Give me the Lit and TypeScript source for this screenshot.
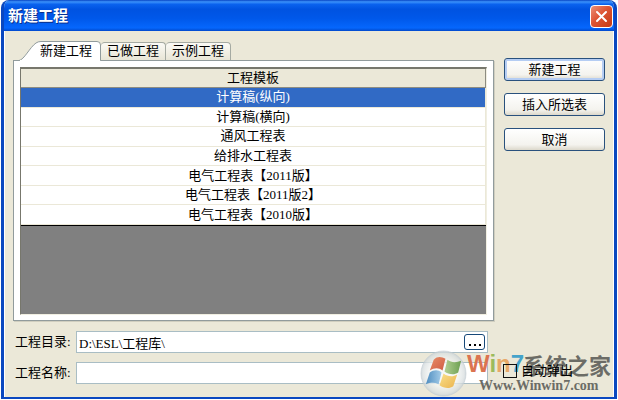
import { LitElement, html, css, svg } from "lit";
import { customElement, property, state } from "lit/decorators.js";
import { classMap } from "lit/directives/class-map.js";

@customElement("template-table")
export class TemplateTable extends LitElement {
  @property({ type: Array }) rows: string[] = [];
  @state() private selected = 0;

  static styles = css`
    :host {
      display: block;
      box-sizing: border-box;
      height: 248px;
      background: #808080;
      border: 1px solid #f1efe2;
      border-top: 2px solid #77776c;
      border-left: 1px solid #77776c;
    }
    table {
      width: 100%;
      height: 157px;
      border-collapse: separate;
      border-spacing: 0;
      table-layout: fixed;
      border-bottom: 1px solid #000;
      background: #fff;
    }
    th {
      height: 18px;
      padding: 0;
      font-weight: normal;
      background: #ebe8d8;
      border-right: 1px solid #8d8c82;
      border-bottom: 1px solid #8d8c82;
      line-height: 18px;
    }
    td {
      padding: 0;
      text-align: center;
      line-height: 18px;
      border-right: 1px solid #ebe8d8;
      border-bottom: 1px solid #ebe8d8;
      cursor: default;
    }
    .selected td {
      background: #316ac5;
      color: #fff;
    }
  `;

  render() {
    return html`<table>
      <thead><tr><th scope="col">工程模板</th></tr></thead>
      <tbody>
        ${this.rows.map(
          (row, i) => html`<tr
            class=${classMap({ selected: i === this.selected })}
            @click=${() => (this.selected = i)}
          ><td>${row}</td></tr>`
        )}
      </tbody>
    </table>`;
  }
}

const orb = svg`
  <defs>
    <radialGradient id="glass"><stop offset="0.6" stop-color="#f4f6f4"/><stop offset="0.9" stop-color="#d9dfe0"/><stop offset="1" stop-color="#c4ced4"/></radialGradient>
    <linearGradient id="red" x2="1" y2="1"><stop stop-color="#e88e68"/><stop offset="1" stop-color="#d05c43"/></linearGradient>
    <linearGradient id="green" x2="1"><stop stop-color="#b2cf92"/><stop offset="1" stop-color="#6da052"/></linearGradient>
    <linearGradient id="blue" x2="1"><stop stop-color="#4f8dc0"/><stop offset="1" stop-color="#a4cce8"/></linearGradient>
    <linearGradient id="gold" x2="1" y2="1"><stop stop-color="#fae08a"/><stop offset="1" stop-color="#eab34d"/></linearGradient>
  </defs>
  <circle cx="24" cy="24" r="23" fill="url(#glass)" fill-opacity="0.75" stroke="#c3ccd0" stroke-opacity="0.6"/>
  <path d="M14 10C18 6 22 7 26 9L23 21C19 18 15 18 10 21Z" fill="url(#red)"/>
  <path d="M28 10C32 13 37 13 42 11L39 23C35 26 29 25 25 22Z" fill="url(#green)"/>
  <path d="M10 23C14 20 19 20 22 23L19 35C15 33 11 33 6 35Z" fill="url(#blue)"/>
  <path d="M24 24C28 27 33 28 38 25L34 37C30 40 24 39 20 36Z" fill="url(#gold)"/>`;

@customElement("app-root")
export class AppRoot extends LitElement {
  private tabs = ["新建工程", "已做工程", "示例工程"];
  private templates = [
    "计算稿(纵向)",
    "计算稿(横向)",
    "通风工程表",
    "给排水工程表",
    "电气工程表【2011版】",
    "电气工程表【2011版2】",
    "电气工程表【2010版】",
  ];

  static styles = css`
    * {
      box-sizing: border-box;
    }
    :host {
      display: block;
      padding: 0 1px 1px;
      background: #fff;
      color: #000;
      font: 13px/16px "Liberation Serif", "Noto Sans CJK SC", sans-serif;
    }
    button,
    input {
      font: inherit;
      color: inherit;
      margin: 0;
    }
    .window {
      position: relative;
      background: #ebe8d8;
      border: solid #0a48c0;
      border-width: 0 3px 2px;
      border-radius: 8px 8px 0 0;
      overflow: hidden;
    }
    .titlebar {
      display: flex;
      align-items: center;
      justify-content: space-between;
      height: 31px;
      margin: 0 -3px;
      padding: 1px 4px 0 7px;
      color: #fff;
      background: linear-gradient(#0845c4 0, #3b92fb 6%, #0a62ee 14%, #0053e1 30%, #0058ea 60%, #0567fd 90%, #0149cc 100%);
    }
    h1 {
      margin: 0;
      font-size: 15px;
      line-height: 20px;
      font-weight: bold;
      text-shadow: 1px 1px #0a2f8c;
    }
    .close {
      display: flex;
      width: 23px;
      height: 23px;
      padding: 0;
      align-items: center;
      justify-content: center;
      border: 1px solid #fff;
      border-radius: 4px;
      background: linear-gradient(135deg, #ec9078, #dd5433 45%, #c33a15);
    }
    .body {
      padding: 10px 7px 13px 8px;
      border: solid #fff;
      border-width: 0 1px;
    }
    .main {
      display: flex;
      gap: 10px;
      align-items: flex-start;
    }
    .tabs-area {
      flex: 1;
    }
    .tabs {
      display: flex;
      align-items: flex-end;
      height: 19px;
    }
    .tab {
      height: 18px;
      width: 65px;
      padding: 0 0 1px;
      line-height: 16px;
      border: 1px solid #a5aaa2;
      border-left-width: 0;
      border-bottom: 0;
      border-radius: 4px 4px 0 0;
      background: linear-gradient(#fbfaf5, #e8e5d6);
    }
    .tab.active {
      position: relative;
      z-index: 1;
      width: 88px;
      height: 20px;
      margin-bottom: -1px;
      padding: 0 4px 1px 22px;
      border: 0;
      background: none;
    }
    .tab.active svg {
      position: absolute;
      inset: 0;
      z-index: -1;
    }
    .panel {
      padding: 6px 6px 5px;
      background: #fff;
      border: 1px solid #919b9c;
      box-shadow: 1px 1px #d0cebf;
    }
    .actions {
      display: flex;
      flex-direction: column;
      gap: 12px;
      width: 101px;
      padding-top: 17px;
      margin-right: 1px;
    }
    .action {
      height: 23px;
      padding: 0;
      line-height: 19px;
      border: 1px solid #29517d;
      border-radius: 3px;
      background: linear-gradient(#fff, #f4f3ee 75%, #dcd8cb);
    }
    .action.default {
      box-shadow: inset 0 0 0 2px #b5cdf3;
    }
    .form {
      display: grid;
      grid-template-columns: 61px 1fr;
      row-gap: 9px;
      margin: 10px 118px 0 2px;
      align-items: center;
    }
    .field {
      display: flex;
      align-items: center;
      height: 22px;
      padding-right: 2px;
      background: #fff;
      border: 1px solid #a9bdc4;
    }
    .field input {
      flex: 1;
      min-width: 0;
      height: 18px;
      padding: 0 2px;
      border: 0;
      outline: 0;
      background: none;
    }
    .browse {
      width: 21px;
      height: 16px;
      display: flex;
      align-items: center;
      justify-content: center;
      padding: 5px 0 0;
      border: 1px solid #164878;
      border-radius: 3px;
      background: #fff;
    }
    .popup {
      position: absolute;
      right: 41px;
      bottom: 18px;
      display: flex;
      align-items: center;
      gap: 4px;
    }
    .popup input {
      appearance: none;
      width: 14px;
      height: 14px;
      border: 1px solid #111;
    }
    .watermark {
      position: absolute;
      right: 3px;
      bottom: 0;
      display: flex;
      align-items: flex-end;
      pointer-events: none;
    }
    .words {
      display: flex;
      flex-direction: column;
      padding-bottom: 2px;
      color: #6c6c66;
    }
    .brand {
      display: flex;
      align-items: center;
      font: bold 22px/26px "Noto Sans CJK SC", sans-serif;
    }
    .win {
      width: 56px;
      font: bold 24px/26px "Liberation Sans", sans-serif;
    }
    .w {
      color: #db7450;
    }
    .i {
      color: #9cbb5c;
    }
    .n {
      color: #e8a868;
    }
    .seven {
      color: #45a3ca;
    }
    .site {
      padding-left: 12px;
      font: bold 14px/18px "Liberation Serif", serif;
    }
  `;

  render() {
    return html`<main class="window">
      <header class="titlebar">
        <h1>新建工程</h1>
        <button class="close" aria-label="关闭">
          <svg width="13" height="13" viewBox="0 0 13 13" stroke="#fff" stroke-width="2" stroke-linecap="round"><path d="M2 2L11 11M11 2L2 11" /></svg>
        </button>
      </header>
      <div class="body">
        <div class="main">
          <section class="tabs-area">
            <div class="tabs" role="tablist">
              ${this.tabs.map(
                (tab, i) => html`<button
                  role="tab"
                  aria-selected=${i === 0 ? "true" : "false"}
                  class=${classMap({ tab: true, active: i === 0 })}
                >${i === 0
                    ? html`<svg width="88" height="20" viewBox="0 0 88 20"><path d="M1 19.500H6C11 19 17 6 23 2Q25 .5 28 .5H84Q87.500 .5 87.500 4V19.500" fill="#fff" stroke="#919b9c" /><path d="M7 19.500H87" stroke="#fff" /></svg>`
                    : ""}${tab}</button>`
              )}
            </div>
            <div class="panel" role="tabpanel">
              <template-table .rows=${this.templates}></template-table>
            </div>
          </section>
          <div class="actions">
            <button class="action default">新建工程</button>
            <button class="action">插入所选表</button>
            <button class="action">取消</button>
          </div>
        </div>
        <div class="form">
          <label for="dir">工程目录:</label>
          <div class="field">
            <input id="dir" type="text" .value=${"D:\\ESL\\工程库\\"} />
            <button class="browse" aria-label="浏览">
              <svg width="12" height="2" fill="#000"><path d="M0 0h2v2H0zM5 0h2v2H5zM10 0h2v2h-2z" /></svg>
            </button>
          </div>
          <label for="name">工程名称:</label>
          <div class="field"><input id="name" type="text" /></div>
        </div>
      </div>
      <div class="watermark">
        <svg width="47" height="47" viewBox="0 0 48 48">${orb}</svg>
        <div class="words">
          <div class="brand">
            <span class="win"><span class="w">W</span><span class="i">i</span><span class="n">n</span><span class="seven">7</span></span>系统之家
          </div>
          <div class="site">Www.Winwin7.com</div>
        </div>
      </div>
      <label class="popup"><input type="checkbox" />自动弹出</label>
    </main>`;
  }
}
